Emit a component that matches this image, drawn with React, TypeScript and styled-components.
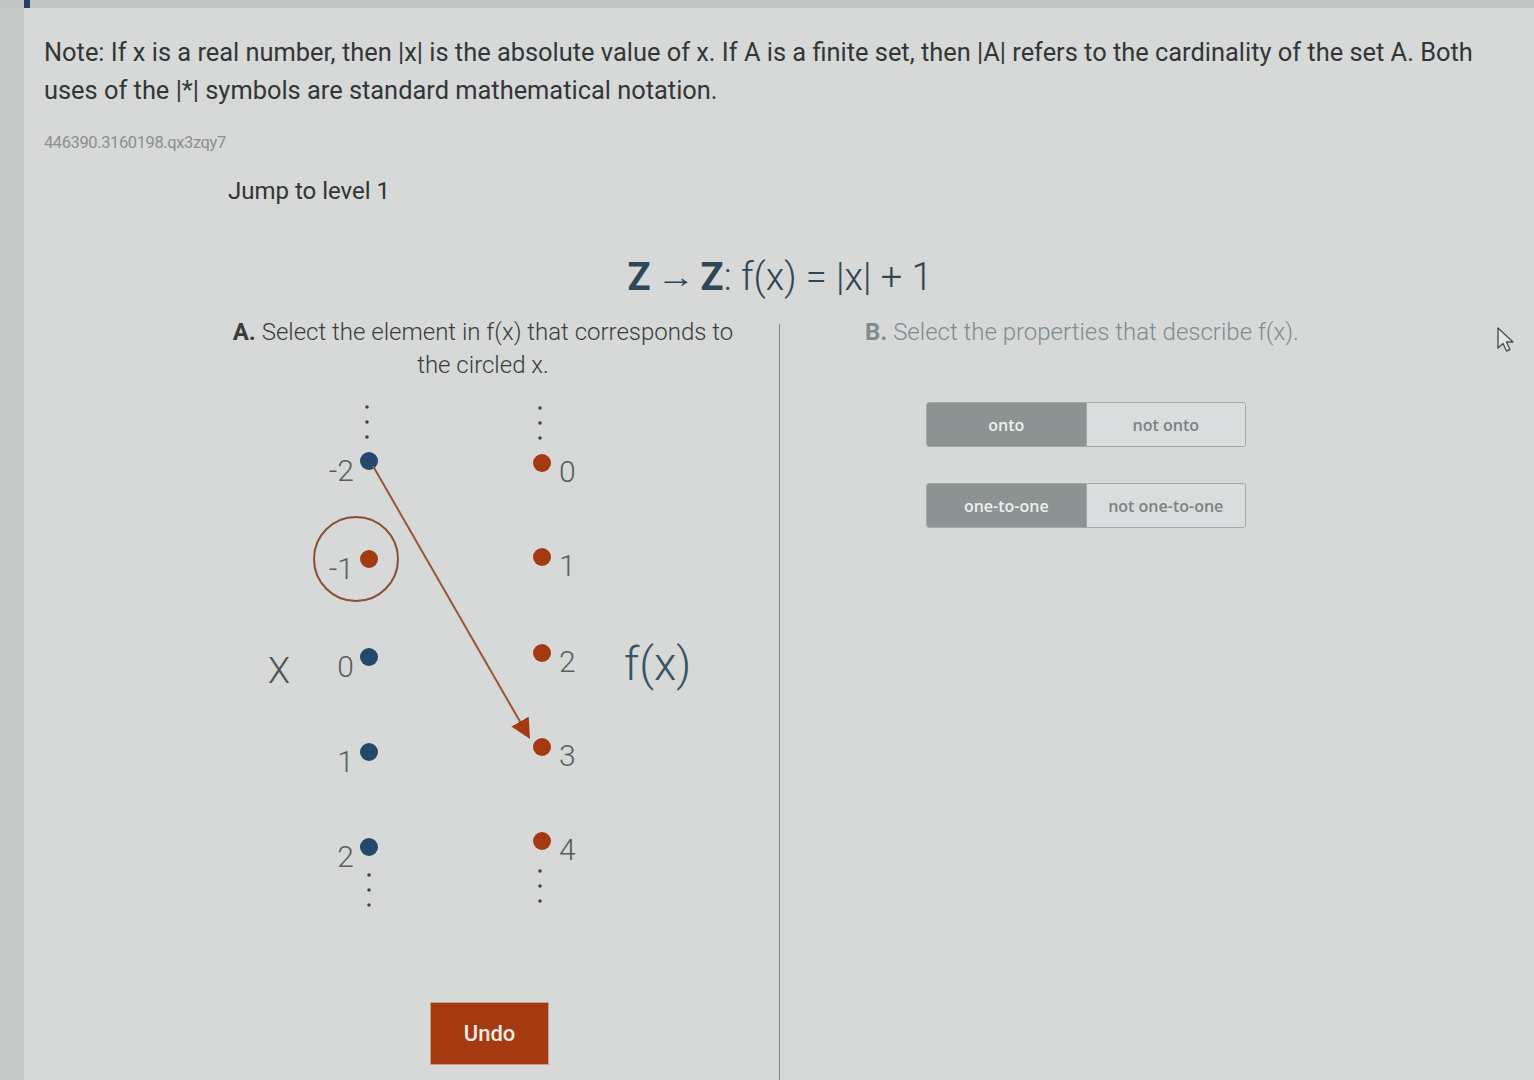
import React from 'react';
import styled, { createGlobalStyle } from 'styled-components';

const GlobalStyle = createGlobalStyle`
  html, body {
    margin: 0;
    padding: 0;
    background: #d4d7d6;
    font-family: Roboto, "Liberation Sans", sans-serif;
  }
`;

const Page = styled.div`
  position: relative;
  min-height: 1080px;
  display: flex;
  flex-direction: column;
  overflow: hidden;
`;

const TopStrip = styled.div`
  height: 8px;
  background: #c3c6c5;
  display: flex;
`;

const Marker = styled.div`
  margin-left: 24px;
  width: 6px;
  background: #24406a;
`;

const Body = styled.div`
  flex: 1;
  display: flex;
`;

const SideStrip = styled.div`
  width: 24px;
  background: #c6c9c8;
`;

const Panel = styled.div`
  flex: 1;
  padding: 25px 0 0 20px;
  background: #d6d9d8;
  display: flex;
  flex-direction: column;
`;

const Note = styled.p`
  margin: 0;
  font-size: 25.4px;
  line-height: 38px;
  color: #333636;
  width: 1468px;
`;

const Ident = styled.div`
  margin-top: 26px;
  font-size: 16.5px;
  line-height: 16px;
  color: #8c8f8f;
  letter-spacing: -0.4px;
`;

const JumpLink = styled.div`
  margin: 26px 0 0 184px;
  font-size: 24px;
  line-height: 28px;
  color: #333;
`;

const Content = styled.div`
  margin-left: 184px;
  width: 1104px;
  flex: 1;
  display: flex;
  flex-direction: column;
`;

const Formula = styled.div`
  margin-top: 50px;
  text-align: center;
  font-size: 38px;
  line-height: 44px;
  color: #2f4656;
  font-weight: 300;
`;

const SetName = styled.span`
  font-weight: 700;
`;

const Arrow = styled.span`
  display: inline-block;
  font-size: 30px;
  font-weight: 300;
  vertical-align: 3px;
  margin: 0 10px;
  transform: scaleX(1.3);
`;

const Columns = styled.div`
  flex: 1;
  display: flex;
  margin-top: 17px;
`;

const LeftColumn = styled.div`
  width: 551px;
  display: flex;
  flex-direction: column;
`;

const Prompt = styled.div<{ $muted?: boolean }>`
  font-size: 24px;
  line-height: 33px;
  color: ${(p) => (p.$muted ? '#7f8b90' : '#3a3c3c')};
  font-weight: 300;
`;

const CenteredPrompt = styled(Prompt)`
  width: 510px;
  text-align: center;
`;

const Label = styled.b<{ $muted?: boolean }>`
  font-weight: 700;
  color: ${(p) => (p.$muted ? '#7f8b90' : '#3a3c3c')};
`;

const Diagram = styled.svg`
  margin-top: 13px;
  display: block;
`;

const UndoButton = styled.button`
  margin: 77px 0 0 202px;
  width: 119px;
  height: 63px;
  border: 1px solid #c9a08c;
  background: #a5390f;
  color: #f4ece6;
  font-family: Roboto, "Liberation Sans", sans-serif;
  font-size: 22px;
  font-weight: 500;
  cursor: pointer;
`;

const Divider = styled.div`
  width: 1px;
  margin-top: 8px;
  background: #6e8a8a;
`;

const RightColumn = styled.div`
  flex: 1;
  padding-left: 85px;
  display: flex;
  flex-direction: column;
`;

const Toggles = styled.div`
  margin: 53px 0 0 61px;
  display: flex;
  flex-direction: column;
  gap: 36px;
`;

const ToggleGroup = styled.div`
  display: flex;
  width: 318px;
  height: 43px;
  border: 1px solid #a3a9a9;
  border-radius: 3px;
  overflow: hidden;
`;

const ToggleOption = styled.div<{ $selected?: boolean }>`
  flex: 1;
  display: flex;
  align-items: center;
  justify-content: center;
  font-family: "Open Sans", Roboto, sans-serif;
  font-size: 16px;
  font-weight: 600;
  background: ${(p) => (p.$selected ? '#8b9393' : '#dadddd')};
  color: ${(p) => (p.$selected ? '#eef0f0' : '#7b8282')};
  & + & {
    border-left: 1px solid #a3a9a9;
  }
`;

const Pointer = styled.svg`
  position: absolute;
  left: 1496px;
  top: 326px;
`;

const leftDots = [
  { label: '-2', y: 66, selected: false },
  { label: '-1', y: 164, selected: true },
  { label: '0', y: 262, selected: false },
  { label: '1', y: 357, selected: false },
  { label: '2', y: 452, selected: false },
];

const rightDots = [
  { label: '0', y: 68 },
  { label: '1', y: 162 },
  { label: '2', y: 258 },
  { label: '3', y: 352 },
  { label: '4', y: 446 },
];

const BLUE = '#24486c';
const ORANGE = '#a43a12';

function Ellipsis({ x, y }: { x: number; y: number }) {
  return (
    <g fill="#444">
      <circle cx={x} cy={y} r={1.8} />
      <circle cx={x} cy={y + 15} r={1.8} />
      <circle cx={x} cy={y + 30} r={1.8} />
    </g>
  );
}

function MappingDiagram() {
  return (
    <Diagram width={551} height={530} viewBox="0 0 551 530">
      <defs>
        <marker id="head" markerWidth="10" markerHeight="10" refX="6" refY="5" orient="auto">
          <path d="M0,0 L10,5 L0,10 z" fill={ORANGE} />
        </marker>
      </defs>
      <Ellipsis x={139} y={12} />
      <Ellipsis x={141} y={480} />
      <Ellipsis x={312} y={13} />
      <Ellipsis x={312} y={476} />

      <text x={40} y={288} fontSize={36} fontWeight={300} fill="#505454" fontFamily="Roboto, sans-serif">
        X
      </text>
      <text x={396} y={285} fontSize={46} fontWeight={300} fill="#3a5464" fontFamily="Roboto, sans-serif">
        f(x)
      </text>

      <circle cx={128} cy={164} r={42} fill="none" stroke="#8b4e36" strokeWidth={2} />

      {leftDots.map((d) => (
        <g key={d.label}>
          <text
            x={126}
            y={d.y + 20}
            textAnchor="end"
            fontSize={30}
            fontWeight={300}
            fill="#5a5e5e"
            fontFamily="Roboto, sans-serif"
          >
            {d.label}
          </text>
          <circle cx={141} cy={d.y} r={9} fill={d.selected ? ORANGE : BLUE} />
        </g>
      ))}

      {rightDots.map((d) => (
        <g key={d.label}>
          <circle cx={314} cy={d.y} r={9} fill={ORANGE} />
          <text x={331} y={d.y + 19} fontSize={30} fontWeight={300} fill="#5a5e5e" fontFamily="Roboto, sans-serif">
            {d.label}
          </text>
        </g>
      ))}

      <line x1={145} y1={71} x2={298} y2={337} stroke="#9a5536" strokeWidth={2} markerEnd="url(#head)" />
    </Diagram>
  );
}

export default function App() {
  return (
    <>
      <GlobalStyle />
      <Page>
        <TopStrip>
          <Marker />
        </TopStrip>
        <Body>
          <SideStrip />
          <Panel>
            <Note>
              Note: If x is a real number, then |x| is the absolute value of x. If A is a finite set, then |A| refers
              to the cardinality of the set A. Both uses of the |*| symbols are standard mathematical notation.
            </Note>
            <Ident>446390.3160198.qx3zqy7</Ident>
            <JumpLink>Jump to level 1</JumpLink>
            <Content>
              <Formula>
                <SetName>Z</SetName>
                <Arrow>→</Arrow>
                <SetName>Z</SetName>: f(x) = |x| + 1
              </Formula>
              <Columns>
                <LeftColumn>
                  <CenteredPrompt>
                    <Label>A.</Label> Select the element in f(x) that corresponds to the circled x.
                  </CenteredPrompt>
                  <MappingDiagram />
                  <UndoButton>Undo</UndoButton>
                </LeftColumn>
                <Divider />
                <RightColumn>
                  <Prompt $muted>
                    <Label $muted>B.</Label> Select the properties that describe f(x).
                  </Prompt>
                  <Toggles>
                    <ToggleGroup>
                      <ToggleOption $selected>onto</ToggleOption>
                      <ToggleOption>not onto</ToggleOption>
                    </ToggleGroup>
                    <ToggleGroup>
                      <ToggleOption $selected>one-to-one</ToggleOption>
                      <ToggleOption>not one-to-one</ToggleOption>
                    </ToggleGroup>
                  </Toggles>
                </RightColumn>
              </Columns>
            </Content>
          </Panel>
        </Body>
        <Pointer width={22} height={28} viewBox="0 0 22 28">
          <path d="M2,2 L2,22 L7,17.5 L10.5,25 L14,23.5 L10.5,16 L17,16 Z" fill="#e4e6e6" stroke="#4a5254" strokeWidth={1.4} strokeLinejoin="round" />
        </Pointer>
      </Page>
    </>
  );
}
